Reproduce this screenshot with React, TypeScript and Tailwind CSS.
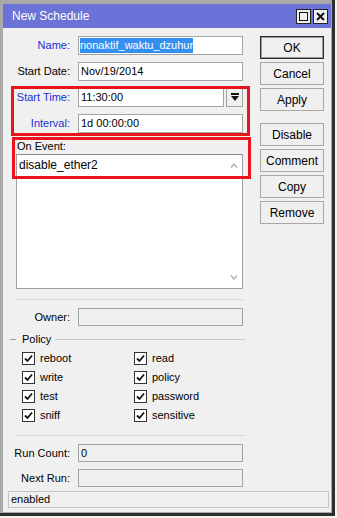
import type { ReactNode } from "react";

const FONT = { fontFamily: '"Liberation Sans", Arial, sans-serif' };

const POLICY_LEFT = ["reboot", "write", "test", "sniff"];
const POLICY_RIGHT = ["read", "policy", "password", "sensitive"];

function Row({
  label,
  blue,
  children,
  h = "h-[19px]",
}: {
  label: string;
  blue?: boolean;
  children: ReactNode;
  h?: string;
}) {
  return (
    <div className={`flex items-center ${h}`}>
      <span
        className={`w-[67px] text-right ${blue ? "text-[#1a2fd6]" : "text-black"}`}
      >
        {label}
      </span>
      <div className="ml-[8px] flex h-full w-[165px]">{children}</div>
    </div>
  );
}

function Field({ value, muted }: { value?: string; muted?: boolean }) {
  return (
    <div
      className={`flex h-full flex-1 items-center border border-[#a3a3a3] pl-[2px] ${
        muted ? "bg-[#f0f0f0]" : "bg-white"
      }`}
    >
      {value}
    </div>
  );
}

function Check({ label }: { label: string }) {
  return (
    <div className="flex h-[19px] items-center">
      <span className="flex h-[13px] w-[13px] items-center justify-center border border-[#333] bg-white">
        <svg width="9" height="9" viewBox="0 0 9 9">
          <path d="M1 4.5 L3.5 7 L8 1.5" fill="none" stroke="#111" strokeWidth="1.8" />
        </svg>
      </span>
      <span className="ml-[5px]">{label}</span>
    </div>
  );
}

function Btn({ children, primary }: { children: ReactNode; primary?: boolean }) {
  return (
    <div
      className={`flex h-[23px] items-center justify-center bg-[#f0f0f0] ${
        primary ? "border border-[#2a2a2a] shadow-[inset_0_0_0_1px_#9a9a9a]" : "border border-[#a8a8a8]"
      }`}
    >
      {children}
    </div>
  );
}

export default function App() {
  return (
    <div className="h-[518px] w-[337px] bg-[#f4f4f4] text-[11px] leading-none text-black" style={FONT}>
      <div className="relative flex h-[516px] w-[335px] flex-col border-b-[3px] border-r-[3px] border-[#2e2e2e] bg-[#a9a9a9] pb-[1px] pl-[3px] pr-[1px] pt-[4px]">
        {/* title bar */}
        <div className="flex h-[24px] items-center bg-[#6c73d8] pl-[9px] pr-[3px] text-[12px] text-white">
          <span className="flex-1">New Schedule</span>
          <div className="flex gap-[2px]">
            <span className="flex h-[15px] w-[15px] items-center justify-center border border-[#222] bg-[#f0f0f0]">
              <span className="h-[9px] w-[9px] border-[1.5px] border-[#111]" />
            </span>
            <span className="flex h-[15px] w-[15px] items-center justify-center border border-[#222] bg-[#f0f0f0]">
              <svg width="9" height="9" viewBox="0 0 9 9">
                <path d="M1 1 L8 8 M8 1 L1 8" stroke="#111" strokeWidth="2" />
              </svg>
            </span>
          </div>
        </div>

        {/* body */}
        <div className="flex flex-1 flex-col bg-[#f0f0f0]">
          <div className="flex">
            <div className="flex w-[247px] flex-col pt-[8px]">
              <div className="flex flex-col gap-[7px]">
                <Row label="Name:" blue>
                  <div className="flex h-full flex-1 items-center border border-[#a3a3a3] bg-white pl-[1px]">
                    <span className="bg-[#3390f0] py-[2px] text-white">nonaktif_waktu_dzuhur</span>
                  </div>
                </Row>
                <Row label="Start Date:">
                  <Field value="Nov/19/2014" />
                </Row>
                <Row label="Start Time:" blue>
                  <Field value="11:30:00" />
                  <span className="ml-[2px] flex w-[17px] items-center justify-center border border-[#a3a3a3] bg-[#f0f0f0]">
                    <svg width="8" height="9" viewBox="0 0 8 9">
                      <rect x="0" y="0" width="8" height="2" fill="#111" />
                      <path d="M0 3 H8 L4 8 Z" fill="#111" />
                    </svg>
                  </span>
                </Row>
                <Row label="Interval:" blue>
                  <Field value="1d 00:00:00" />
                </Row>
              </div>

              <div className="ml-[14px] mt-[8px] h-[13px]">On Event:</div>
              <div className="ml-[13px] flex h-[135px] w-[227px] border border-[#a0a0a0] border-t-[#8a8a8a] bg-white">
                <div className="flex-1 pl-[2px] pt-[4px] text-[12px]">disable_ether2</div>
                <div className="flex w-[16px] flex-col items-center justify-between py-[8px] text-[#b8b8b8]">
                  <svg width="8" height="5" viewBox="0 0 8 5">
                    <path d="M1 4.5 L4 1 L7 4.5" fill="none" stroke="#b0b0b0" strokeWidth="1.5" />
                  </svg>
                  <svg width="8" height="5" viewBox="0 0 8 5">
                    <path d="M1 0.5 L4 4 L7 0.5" fill="none" stroke="#b0b0b0" strokeWidth="1.5" />
                  </svg>
                </div>
              </div>

              <div className="ml-[13px] mt-[10px] h-px w-[227px] bg-[#d4d4d4]" />
              <div className="mt-[8px]">
                <Row label="Owner:" h="h-[18px]">
                  <Field muted />
                </Row>
              </div>

              <div className="mt-[6px] flex h-[14px] items-center">
                <span className="ml-[7px] h-px w-[6px] bg-[#a0a0a0]" />
                <span className="ml-[6px]">Policy</span>
                <span className="ml-[4px] mr-[5px] h-px flex-1 bg-[#c8c8c8]" />
              </div>
              <div className="mt-[3px] flex pl-[19px]">
                <div className="flex w-[112px] flex-col">
                  {POLICY_LEFT.map((p) => (
                    <Check key={p} label={p} />
                  ))}
                </div>
                <div className="flex flex-col">
                  {POLICY_RIGHT.map((p) => (
                    <Check key={p} label={p} />
                  ))}
                </div>
              </div>

              <div className="ml-[13px] mt-[10px] h-px w-[229px] bg-[#d4d4d4]" />
              <div className="mt-[8px] flex flex-col gap-[7px]">
                <Row label="Run Count:" h="h-[18px]">
                  <Field value="0" muted />
                </Row>
                <Row label="Next Run:" h="h-[18px]">
                  <Field muted />
                </Row>
              </div>
            </div>

            <div className="ml-[10px] flex w-[64px] flex-col gap-[3px] pt-[8px] text-[12px]">
              <Btn primary>OK</Btn>
              <Btn>Cancel</Btn>
              <Btn>Apply</Btn>
              <div className="h-[6px]" />
              <Btn>Disable</Btn>
              <Btn>Comment</Btn>
              <Btn>Copy</Btn>
              <Btn>Remove</Btn>
            </div>
          </div>

          <div className="mb-[4px] ml-[5px] mt-auto flex h-[17px] w-[321px] items-center border border-[#c4c4c4] pl-[2px] text-[11px]">
            enabled
          </div>
        </div>

        {/* annotation boxes */}
        <div className="pointer-events-none absolute left-[11px] top-[86px] h-[50px] w-[239px] border-[3px] border-[#e8141c]" />
        <div className="pointer-events-none absolute left-[12px] top-[137px] h-[42px] w-[239px] border-[3px] border-[#e8141c]" />
      </div>
    </div>
  );
}
